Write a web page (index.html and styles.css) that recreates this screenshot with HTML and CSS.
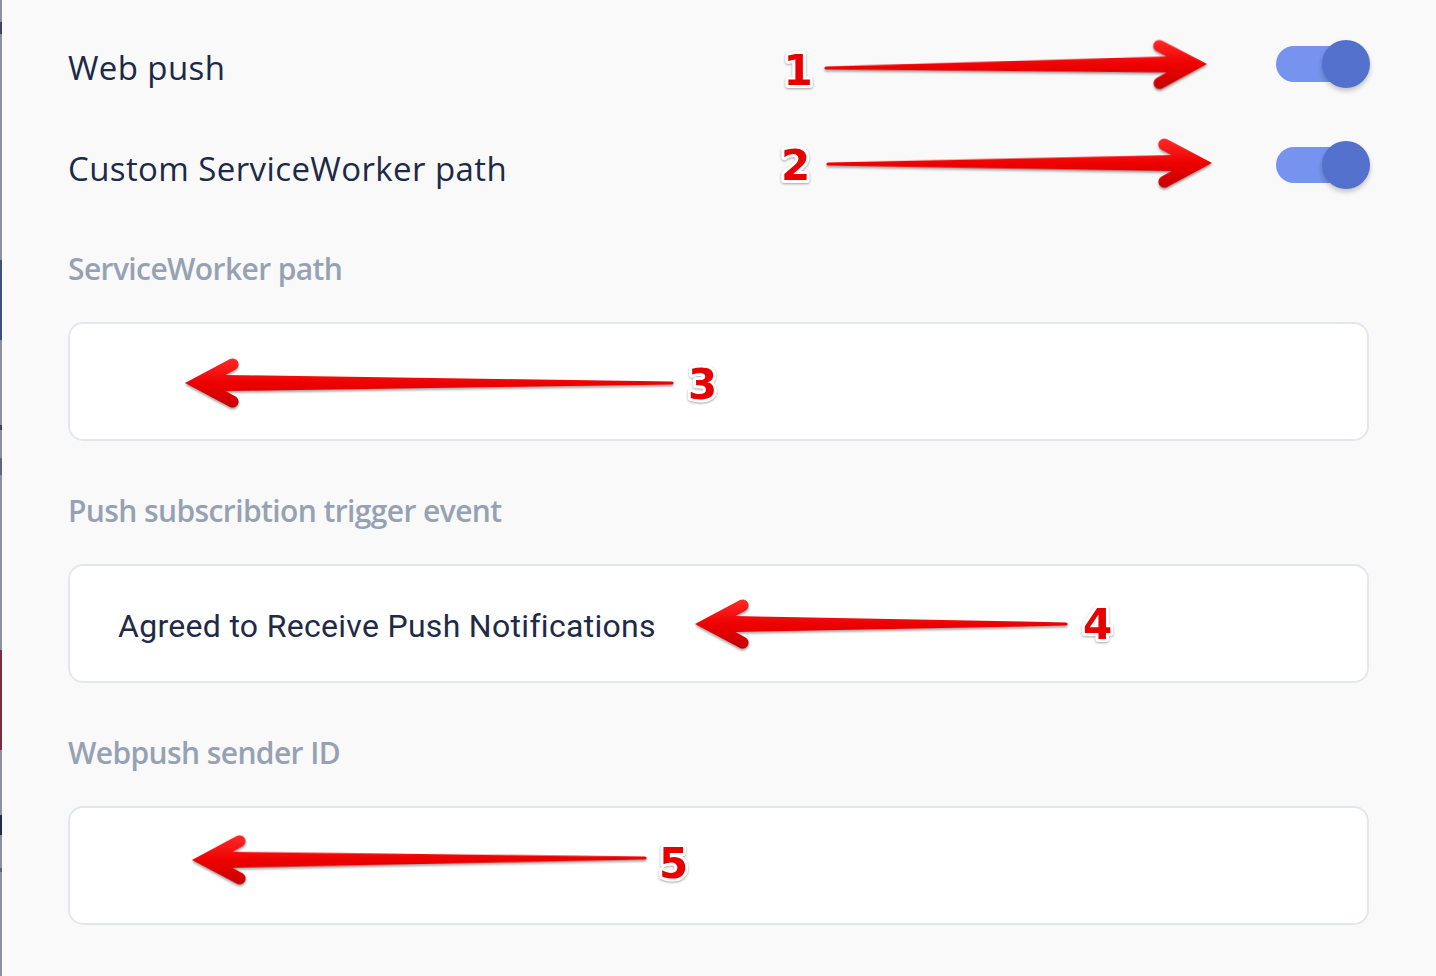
FILE: index.html
```html
<!DOCTYPE html>
<html lang="en">
<head>
<meta charset="utf-8">
<title>Web push settings</title>
<link rel="stylesheet" href="styles.css">
</head>
<body>
<div class="edge">
  <span class="seg s-gap" style="height:22px"></span>
  <span class="seg s-mark" style="height:12px"></span>
  <span class="seg s-gap" style="height:226px"></span>
  <span class="seg s-blue" style="height:80px"></span>
  <span class="seg s-gap" style="height:85px"></span>
  <span class="seg s-mark" style="height:5px"></span>
  <span class="seg s-gap" style="height:28px"></span>
  <span class="seg s-mid" style="height:17px"></span>
  <span class="seg s-gap" style="height:175px"></span>
  <span class="seg s-red" style="height:100px"></span>
  <span class="seg s-gap" style="height:65px"></span>
  <span class="seg s-navy" style="height:20px"></span>
  <span class="seg s-gap" style="height:33px"></span>
  <span class="seg s-mid" style="height:4px"></span>
  <span class="seg s-gap" style="height:104px"></span>
</div>
<main class="settings">
  <div class="switch-row first">
    <span class="switch-label">Web push</span>
    <span class="toggle" role="switch" aria-checked="true"></span>
  </div>
  <div class="switch-row second">
    <span class="switch-label">Custom ServiceWorker path</span>
    <span class="toggle" role="switch" aria-checked="true"></span>
  </div>

  <div class="field first-field">
    <div class="field-label">ServiceWorker path</div>
    <div class="field-input"></div>
  </div>
  <div class="field">
    <div class="field-label">Push subscribtion trigger event</div>
    <div class="field-input"><span class="input-value">Agreed to Receive Push Notifications</span></div>
  </div>
  <div class="field">
    <div class="field-label">Webpush sender ID</div>
    <div class="field-input"></div>
  </div>
</main>

<svg class="annotations" width="1436" height="976" viewBox="0 0 1436 976" aria-hidden="true">
  <defs>
    <linearGradient id="red" x1="0" y1="0" x2="0" y2="1">
      <stop offset="0" stop-color="#ff2a2a"/>
      <stop offset="0.5" stop-color="#ee0000"/>
      <stop offset="1" stop-color="#c60000"/>
    </linearGradient>
  </defs>
  <g class="arrow" transform="translate(1207 64) rotate(-0.6)">
    <path d="M0 0 L-45 -24 A6 6 0 0 0 -50.6 -13.4 L-40.5 -8 L-381 -1.6 A1.6 1.6 0 0 0 -381 1.6 L-40.5 8 L-50.6 13.4 A6 6 0 0 0 -45 24 Z"/>
  </g>
  <g class="arrow" transform="translate(1212 163) rotate(-0.15)">
    <path d="M0 0 L-45 -24 A6 6 0 0 0 -50.6 -13.4 L-40.5 -8 L-384 -1.6 A1.6 1.6 0 0 0 -384 1.6 L-40.5 8 L-50.6 13.4 A6 6 0 0 0 -45 24 Z"/>
  </g>
  <g class="arrow" transform="translate(185 383) scale(-1 1)">
    <path d="M0 0 L-45 -24 A6 6 0 0 0 -50.6 -13.4 L-40.5 -8 L-487 -1.6 A1.6 1.6 0 0 0 -487 1.6 L-40.5 8 L-50.6 13.4 A6 6 0 0 0 -45 24 Z"/>
  </g>
  <g class="arrow" transform="translate(695 624) scale(-1 1)">
    <path d="M0 0 L-45 -24 A6 6 0 0 0 -50.6 -13.4 L-40.5 -8 L-371 -1.6 A1.6 1.6 0 0 0 -371 1.6 L-40.5 8 L-50.6 13.4 A6 6 0 0 0 -45 24 Z"/>
  </g>
  <g class="arrow" transform="translate(192 860) scale(-1 1) rotate(0.25)">
    <path d="M0 0 L-45 -24 A6 6 0 0 0 -50.6 -13.4 L-40.5 -8 L-453 -1.6 A1.6 1.6 0 0 0 -453 1.6 L-40.5 8 L-50.6 13.4 A6 6 0 0 0 -45 24 Z"/>
  </g>
  <text class="num" x="798" y="85">1</text>
  <text class="num" x="795.5" y="180">2</text>
  <text class="num" x="702.5" y="399">3</text>
  <text class="num" x="1097.5" y="639">4</text>
  <text class="num" x="673.5" y="878">5</text>
</svg>
</body>
</html>
```
FILE: styles.css
```css
* { box-sizing: border-box; }

html, body {
  margin: 0;
  padding: 0;
}

body {
  position: relative;
  width: 1436px;
  height: 976px;
  overflow: hidden;
  background: #f9f9f9;
  display: flex;
  font-family: "Open Sans", "Liberation Sans", sans-serif;
}

/* thin edge of the neighbouring window */
.edge {
  width: 2px;
  flex: none;
  display: flex;
  flex-direction: column;
}
.seg { display: block; width: 2px; flex: none; }
.s-gap { background: #8891a4; }
.s-mark { background: #3a4663; }
.s-blue { background: #3e5277; }
.s-mid { background: #5c6682; }
.s-red { background: #7b2d40; }
.s-navy { background: #1e2b4a; }

.settings {
  flex: 1;
  padding: 0 67px 0 66px;
  display: flex;
  flex-direction: column;
}

.switch-row {
  display: flex;
  justify-content: space-between;
  align-items: flex-start;
  height: 48px;
}
.switch-row.first { margin-top: 40px; }
.switch-row.second { margin-top: 53px; }

.switch-label {
  font-size: 33px;
  line-height: 48px;
  margin-top: 4px;
  color: #1c2947;
  letter-spacing: 0.4px;
}

.toggle {
  position: relative;
  width: 94px;
  height: 48px;
  flex: none;
  margin-right: -1px;
}
.toggle::before {
  content: "";
  position: absolute;
  left: 0;
  top: 6px;
  width: 82px;
  height: 36px;
  border-radius: 18px;
  background: #7593ef;
}
.toggle::after {
  content: "";
  position: absolute;
  right: 0;
  top: 0;
  width: 48px;
  height: 48px;
  border-radius: 50%;
  background: #5371cc;
  box-shadow: 0 3px 5px rgba(0, 0, 0, 0.22);
}

.field { margin-top: 52px; }
.field.first-field { margin-top: 62px; }

.field-label {
  font-size: 30px;
  line-height: 36px;
  font-weight: 600;
  color: #96a2b3;
  letter-spacing: -0.6px;
}

.field-input {
  margin-top: 35px;
  height: 119px;
  border: 2px solid #e3e7ec;
  border-radius: 15px;
  background: #ffffff;
  display: flex;
  align-items: center;
  padding: 5px 48px 0 48px;
}

.input-value {
  font-family: Roboto, "Liberation Sans", sans-serif;
  font-size: 32px;
  letter-spacing: 0.3px;
  color: #1f2a46;
}

.annotations {
  position: absolute;
  left: 0;
  top: 0;
  pointer-events: none;
}
.arrow path {
  fill: url(#red);
  filter: drop-shadow(0 2px 1px rgba(0, 0, 0, 0.35));
}
.num {
  font-family: "DejaVu Sans", sans-serif;
  font-weight: bold;
  font-size: 42px;
  text-anchor: middle;
  fill: #e60000;
  stroke: #ffffff;
  stroke-width: 6px;
  stroke-linejoin: round;
  paint-order: stroke;
  filter: drop-shadow(0 1.5px 1px rgba(0, 0, 0, 0.35));
}
```
